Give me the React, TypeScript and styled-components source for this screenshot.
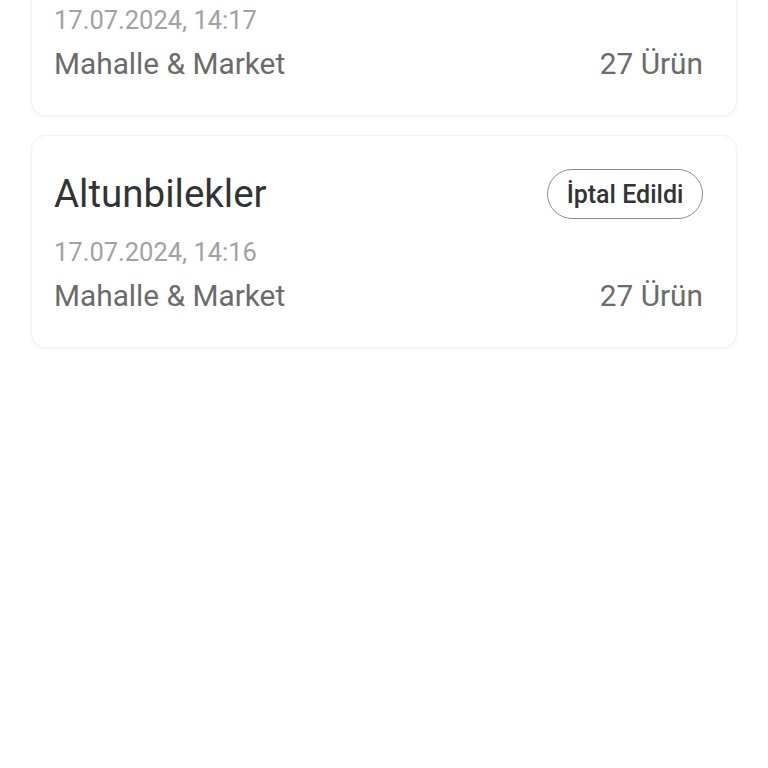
import React from "react";
import styled, { createGlobalStyle } from "styled-components";

type Order = {
    id: number;
    store: string;
    date: string;
    channel: string;
    count: number;
    status: string;
};

const orders: Order[] = [
    {
        id: 1,
        store: "Altunbilekler",
        date: "17.07.2024, 14:17",
        channel: "Mahalle & Market",
        count: 27,
        status: "İptal Edildi",
    },
    {
        id: 2,
        store: "Altunbilekler",
        date: "17.07.2024, 14:16",
        channel: "Mahalle & Market",
        count: 27,
        status: "İptal Edildi",
    },
];

const App: React.FC = () => {
    return (
        <>
            <GlobalStyle />
            <Page>
                <OrderList>
                    {orders.map((order) => (
                        <Card key={order.id}>
                            <CardHeader>
                                <StoreName>{order.store}</StoreName>
                                <StatusBadge>{order.status}</StatusBadge>
                            </CardHeader>
                            <DateText>{order.date}</DateText>
                            <InfoRow>
                                <InfoText>{order.channel}</InfoText>
                                <InfoText>{order.count} Ürün</InfoText>
                            </InfoRow>
                        </Card>
                    ))}
                </OrderList>
            </Page>
        </>
    );
};

export default App;

const GlobalStyle = createGlobalStyle`
    html, body {
        margin: 0;
        padding: 0;
        background: #ffffff;
        font-family: Roboto, "Noto Sans", sans-serif;
        overflow: hidden;
    }
`;

const Page = styled.div`
    width: 768px;
    height: 768px;
    overflow: hidden;
    background: #ffffff;
`;

// liste yukarı kaydırılmış halde: ilk kartın üst kısmı ekran dışında
const OrderList = styled.div`
    display: flex;
    flex-direction: column;
    gap: 21px;
    padding: 0 32px;
    margin-top: -96px;
`;

const Card = styled.div`
    background: #ffffff;
    border-radius: 14px;
    padding: 33px 33px 34px 22px;
    box-shadow: 0 0 0 1px #f2f2f2, 0 1px 5px rgba(0, 0, 0, 0.07);
    display: flex;
    flex-direction: column;
`;

const CardHeader = styled.div`
    display: flex;
    align-items: center;
    justify-content: space-between;
    height: 50px;
    margin-bottom: 18px;
`;

const StoreName = styled.div`
    font-size: 38.5px;
    line-height: 44px;
    font-weight: 400;
    color: #333333;
`;

const StatusBadge = styled.div`
    box-sizing: border-box;
    height: 50px;
    width: 156px;
    display: flex;
    align-items: center;
    justify-content: center;
    border: 1.5px solid #8c8c8c;
    border-radius: 25px;
    font-size: 25px;
    font-weight: 500;
    color: #333333;
`;

const DateText = styled.div`
    font-size: 25.5px;
    line-height: 30px;
    color: #a2a2a2;
    margin-bottom: 11px;
`;

const InfoRow = styled.div`
    display: flex;
    justify-content: space-between;
    align-items: center;
`;

const InfoText = styled.div`
    font-size: 29.8px;
    line-height: 35px;
    color: #6b6b6b;
`;
